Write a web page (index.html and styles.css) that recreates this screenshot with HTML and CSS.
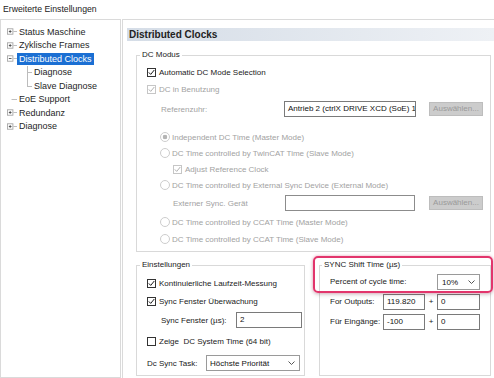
FILE: index.html
```html
<!DOCTYPE html>
<html lang="de">
<head>
    <meta charset="UTF-8">
    <meta name="viewport" content="width=device-width, initial-scale=1.0">
    <title>Erweiterte Einstellungen</title>
    <link rel="stylesheet" href="styles.css">
</head>
<body>
    <div class="title">Erweiterte Einstellungen</div>

    <div class="main">
        <div class="tree">
            <div class="node">
                <span class="exp"><svg class="ex" viewBox="0 0 11 7"><rect x="0.5" y="0.5" width="6" height="6"/><path class="sign" d="M2 3.5h3M3.5 2v3"/><path class="stub" d="M7 3.5h4"/></svg></span>
                <span class="lbl">Status Maschine</span>
            </div>
            <div class="node">
                <span class="exp"><svg class="ex" viewBox="0 0 11 7"><rect x="0.5" y="0.5" width="6" height="6"/><path class="sign" d="M2 3.5h3M3.5 2v3"/><path class="stub" d="M7 3.5h4"/></svg></span>
                <span class="lbl">Zyklische Frames</span>
            </div>
            <div class="node">
                <span class="exp"><svg class="ex" viewBox="0 0 11 7"><rect x="0.5" y="0.5" width="6" height="6"/><path class="sign" d="M2 3.5h3"/><path class="stub" d="M7 3.5h4"/></svg></span>
                <span class="lbl sel">Distributed Clocks</span>
            </div>
            <div class="node child">
                <span class="branch"></span>
                <span class="lbl">Diagnose</span>
            </div>
            <div class="node child last">
                <span class="branch"></span>
                <span class="lbl">Slave Diagnose</span>
            </div>
            <div class="node">
                <span class="exp"><svg class="ex" viewBox="0 0 11 7"><path class="stub" d="M5 3.5h6"/></svg></span>
                <span class="lbl">EoE Support</span>
            </div>
            <div class="node">
                <span class="exp"><svg class="ex" viewBox="0 0 11 7"><rect x="0.5" y="0.5" width="6" height="6"/><path class="sign" d="M2 3.5h3M3.5 2v3"/><path class="stub" d="M7 3.5h4"/></svg></span>
                <span class="lbl">Redundanz</span>
            </div>
            <div class="node">
                <span class="exp"><svg class="ex" viewBox="0 0 11 7"><rect x="0.5" y="0.5" width="6" height="6"/><path class="sign" d="M2 3.5h3M3.5 2v3"/><path class="stub" d="M7 3.5h4"/></svg></span>
                <span class="lbl">Diagnose</span>
            </div>
        </div>

        <div class="pane">
            <div class="pane-head">Distributed Clocks</div>

            <div class="groups">
                <fieldset class="group dc">
                    <legend>DC Modus</legend>
                    <div class="dc-rows">
                        <div class="row"><span class="cb"><svg viewBox="0 0 7 7"><path d="M0.8 3.4l1.9 2L6.3 1"/></svg></span>Automatic DC Mode Selection</div>
                        <div class="row off"><span class="cb"><svg viewBox="0 0 7 7"><path d="M0.8 3.4l1.9 2L6.3 1"/></svg></span>DC in Benutzung</div>
                        <div class="row off ref">
                            <span class="field-lbl">Referenzuhr:</span>
                            <span class="tb">Antrieb 2 (ctrlX DRIVE XCD (SoE) 1</span>
                            <span class="btn">Auswählen...</span>
                        </div>
                        <div class="row off sub"><span class="rb on"></span>Independent DC Time (Master Mode)</div>
                        <div class="row off sub"><span class="rb"></span>DC Time controlled by TwinCAT Time (Slave Mode)</div>
                        <div class="row off sub2"><span class="cb"><svg viewBox="0 0 7 7"><path d="M0.8 3.4l1.9 2L6.3 1"/></svg></span>Adjust Reference Clock</div>
                        <div class="row off sub"><span class="rb"></span>DC Time controlled by External Sync Device (External Mode)</div>
                        <div class="row off ext">
                            <span class="field-lbl">Externer Sync. Gerät</span>
                            <span class="tb"></span>
                            <span class="btn">Auswählen...</span>
                        </div>
                        <div class="row off sub"><span class="rb"></span>DC Time controlled by CCAT Time (Master Mode)</div>
                        <div class="row off sub"><span class="rb"></span>DC Time controlled by CCAT Time (Slave Mode)</div>
                    </div>
                </fieldset>

                <div class="bottom">
                    <fieldset class="group settings">
                        <legend>Einstellungen</legend>
                        <div class="set-rows">
                            <div class="row"><span class="cb"><svg viewBox="0 0 7 7"><path d="M0.8 3.4l1.9 2L6.3 1"/></svg></span>Kontinuierliche Laufzeit-Messung</div>
                            <div class="row"><span class="cb"><svg viewBox="0 0 7 7"><path d="M0.8 3.4l1.9 2L6.3 1"/></svg></span>Sync Fenster Überwachung</div>
                            <div class="row window">
                                <span class="field-lbl">Sync Fenster (µs):</span>
                                <span class="tb">2</span>
                            </div>
                            <div class="row"><span class="cb"></span>Zeige&nbsp; DC System Time (64 bit)</div>
                            <div class="row task">
                                <span class="field-lbl">Dc Sync Task:</span>
                                <span class="dd">Höchste Priorität<svg class="chev" viewBox="0 0 7 4"><path d="M0.5 0.5l3 3 3-3"/></svg></span>
                            </div>
                        </div>
                    </fieldset>

                    <fieldset class="group sync">
                        <legend>SYNC Shift Time (µs)</legend>
                        <div class="sync-grid">
                            <span class="cell wide">Percent of cycle time:</span>
                            <span class="dd">10%<svg class="chev" viewBox="0 0 7 4"><path d="M0.5 0.5l3 3 3-3"/></svg></span>
                            <span class="cell">For Outputs:</span>
                            <span class="tb">119.820</span>
                            <span class="cell plus">+</span>
                            <span class="tb">0</span>
                            <span class="cell">Für Eingänge:</span>
                            <span class="tb">-100</span>
                            <span class="cell plus">+</span>
                            <span class="tb">0</span>
                        </div>
                    </fieldset>
                </div>
            </div>
        </div>
    </div>

    <div class="mark"></div>
</body>
</html>
```

FILE: styles.css
```css
body {
    margin: 0;
    width: 494px;
    height: 378px;
    overflow: hidden;
    position: relative;
    background: #fff;
    font-family: "Liberation Sans", Arial, sans-serif;
    color: #1a1a1a;
}
.title {
    height: 19px;
    line-height: 18px;
    padding-left: 3px;
    font-size: 8.7px;
    color: #222;
}
.main {
    display: flex;
    gap: 1px;
    height: 359px;
}

/* tree */
.tree {
    flex: none;
    width: 119px;
    border: 1px solid #dadada;
    padding-top: 5px;
    font-size: 9px;
}
.node {
    display: flex;
    align-items: center;
    height: 13.5px;
    white-space: nowrap;
}
.exp {
    flex: none;
    display: flex;
    width: 16px;
    padding-left: 6px;
    box-sizing: border-box;
}
.ex {
    width: 11px;
    height: 7px;
}
.ex rect {
    fill: #fff;
    stroke: #a8a8a8;
}
.ex .sign {
    stroke: #4a4a4a;
}
.ex .stub {
    stroke: #b8b8b8;
}
.lbl {
    padding: 0 2px;
    line-height: 12px;
    color: #1e1e1e;
}
.lbl.sel {
    background: #1b6fd3;
    color: #fff;
}
.branch {
    flex: none;
    align-self: stretch;
    width: 4px;
    margin-left: 26px;
    border-left: 1px solid #bcbcbc;
    background: linear-gradient(#bcbcbc, #bcbcbc) no-repeat 0 50% / 100% 1px;
}
.last .branch {
    align-self: flex-start;
    height: 50%;
    background: none;
    border-bottom: 1px solid #bcbcbc;
}

/* right pane */
.pane {
    flex: 1;
    border-left: 1px solid #dadada;
    border-top: 1px solid #dadada;
    padding: 8px 0 0 4px;
}
.pane-head {
    height: 13px;
    line-height: 13px;
    padding-left: 2px;
    font-size: 10px;
    font-weight: bold;
    color: #222;
    background: linear-gradient(to right, #d5dde7, #eef1f5);
}
.groups {
    padding: 0 3px 0 9px;
}
.group {
    margin: 0;
    padding: 0;
    min-width: 0;
    border: 1px solid #d9d9d9;
}
.group legend {
    padding: 0 2px;
    margin-left: 3px;
    font-size: 8px;
    line-height: 10px;
    color: #222;
}
.dc {
    margin-top: 9px;
}
.dc-rows {
    display: grid;
    grid-template-rows: 17px 20px 28px 16px 16px 16px 18px 19px 17px 16px;
    align-items: start;
    padding: 4px 7px 4px 10px;
}
.row {
    display: flex;
    align-items: center;
    height: 16px;
    font-size: 8px;
    white-space: nowrap;
}
.row.off {
    color: #a2a2a2;
}
.sub {
    padding-left: 13px;
}
.sub2 {
    padding-left: 26px;
}
.cb {
    flex: none;
    display: flex;
    align-items: center;
    justify-content: center;
    width: 9px;
    height: 9px;
    box-sizing: border-box;
    margin-right: 3px;
    border: 1px solid #333;
    background: #fff;
    color: #1a1a1a;
}
.cb svg {
    width: 7px;
    height: 7px;
    fill: none;
    stroke: currentColor;
    stroke-width: 1;
}
.off .cb {
    border-color: #c6c6c6;
    color: #b0b0b0;
}
.rb {
    flex: none;
    width: 10px;
    height: 10px;
    box-sizing: border-box;
    margin-right: 2px;
    border: 1px solid #cdcdcd;
    border-radius: 50%;
    background: #fff;
}
.rb.on {
    background: radial-gradient(circle, #b4b4b4 0 2px, #fff 2.6px);
}
.tb {
    flex: none;
    box-sizing: border-box;
    height: 16px;
    line-height: 14px;
    padding-left: 3px;
    border: 1px solid #7a7a7a;
    background: #fff;
    color: #111;
    font-size: 8px;
    overflow: hidden;
    white-space: nowrap;
}
.btn {
    flex: none;
    box-sizing: border-box;
    width: 54px;
    height: 14px;
    margin-left: auto;
    line-height: 12px;
    text-align: center;
    border: 1px solid #bdbdbd;
    background: #cccccc;
    color: #9a9a9a;
}
.field-lbl {
    flex: none;
}
.ref {
    padding-left: 14px;
}
.ref .field-lbl {
    width: 123px;
}
.ref .tb {
    width: 132px;
}
.ext {
    padding-left: 26px;
}
.ext .field-lbl {
    width: 112px;
}
.ext .tb {
    width: 130px;
    border-color: #8c8c8c;
}

/* bottom groups */
.bottom {
    display: flex;
    gap: 14px;
    margin-top: 8px;
}
.settings {
    flex: none;
    width: 169px;
    box-sizing: border-box;
}
.set-rows {
    display: grid;
    grid-template-rows: 18px 19px 21px 22px 16px;
    align-items: start;
    padding: 5px 0 4px 10px;
}
.window {
    padding-left: 14px;
}
.window .field-lbl {
    width: 75px;
}
.window .tb {
    width: 66px;
}
.task .field-lbl {
    width: 59px;
}
.task .dd {
    width: 94px;
}
.dd {
    flex: none;
    display: flex;
    align-items: center;
    justify-content: space-between;
    box-sizing: border-box;
    height: 16px;
    padding: 0 4px 0 3px;
    border: 1px solid #9a9a9a;
    background: #fff;
    color: #111;
    font-size: 8px;
}
.chev {
    width: 7px;
    height: 4px;
    fill: none;
    stroke: #555;
}
.sync {
    flex: 1;
}
.sync legend {
    margin-left: 2px;
}
.sync-grid {
    display: grid;
    grid-template-columns: 53px 42px 12px 43px;
    grid-auto-rows: 20px;
    align-items: start;
    padding: 4px 0 0 10px;
    font-size: 8px;
}
.cell {
    line-height: 16px;
    white-space: nowrap;
}
.cell.wide {
    grid-column: span 3;
}
.cell.plus {
    text-align: center;
}
.sync-grid .dd {
    padding-left: 4px;
}

/* red annotation frame */
.mark {
    position: absolute;
    left: 313px;
    top: 256px;
    width: 180px;
    height: 37px;
    box-sizing: border-box;
    border: 2.5px solid #e2356c;
    border-radius: 5px;
    box-shadow: 0 0 3px rgba(226, 53, 108, 0.45), 0 2px 4px rgba(0, 0, 0, 0.15);
}
```
